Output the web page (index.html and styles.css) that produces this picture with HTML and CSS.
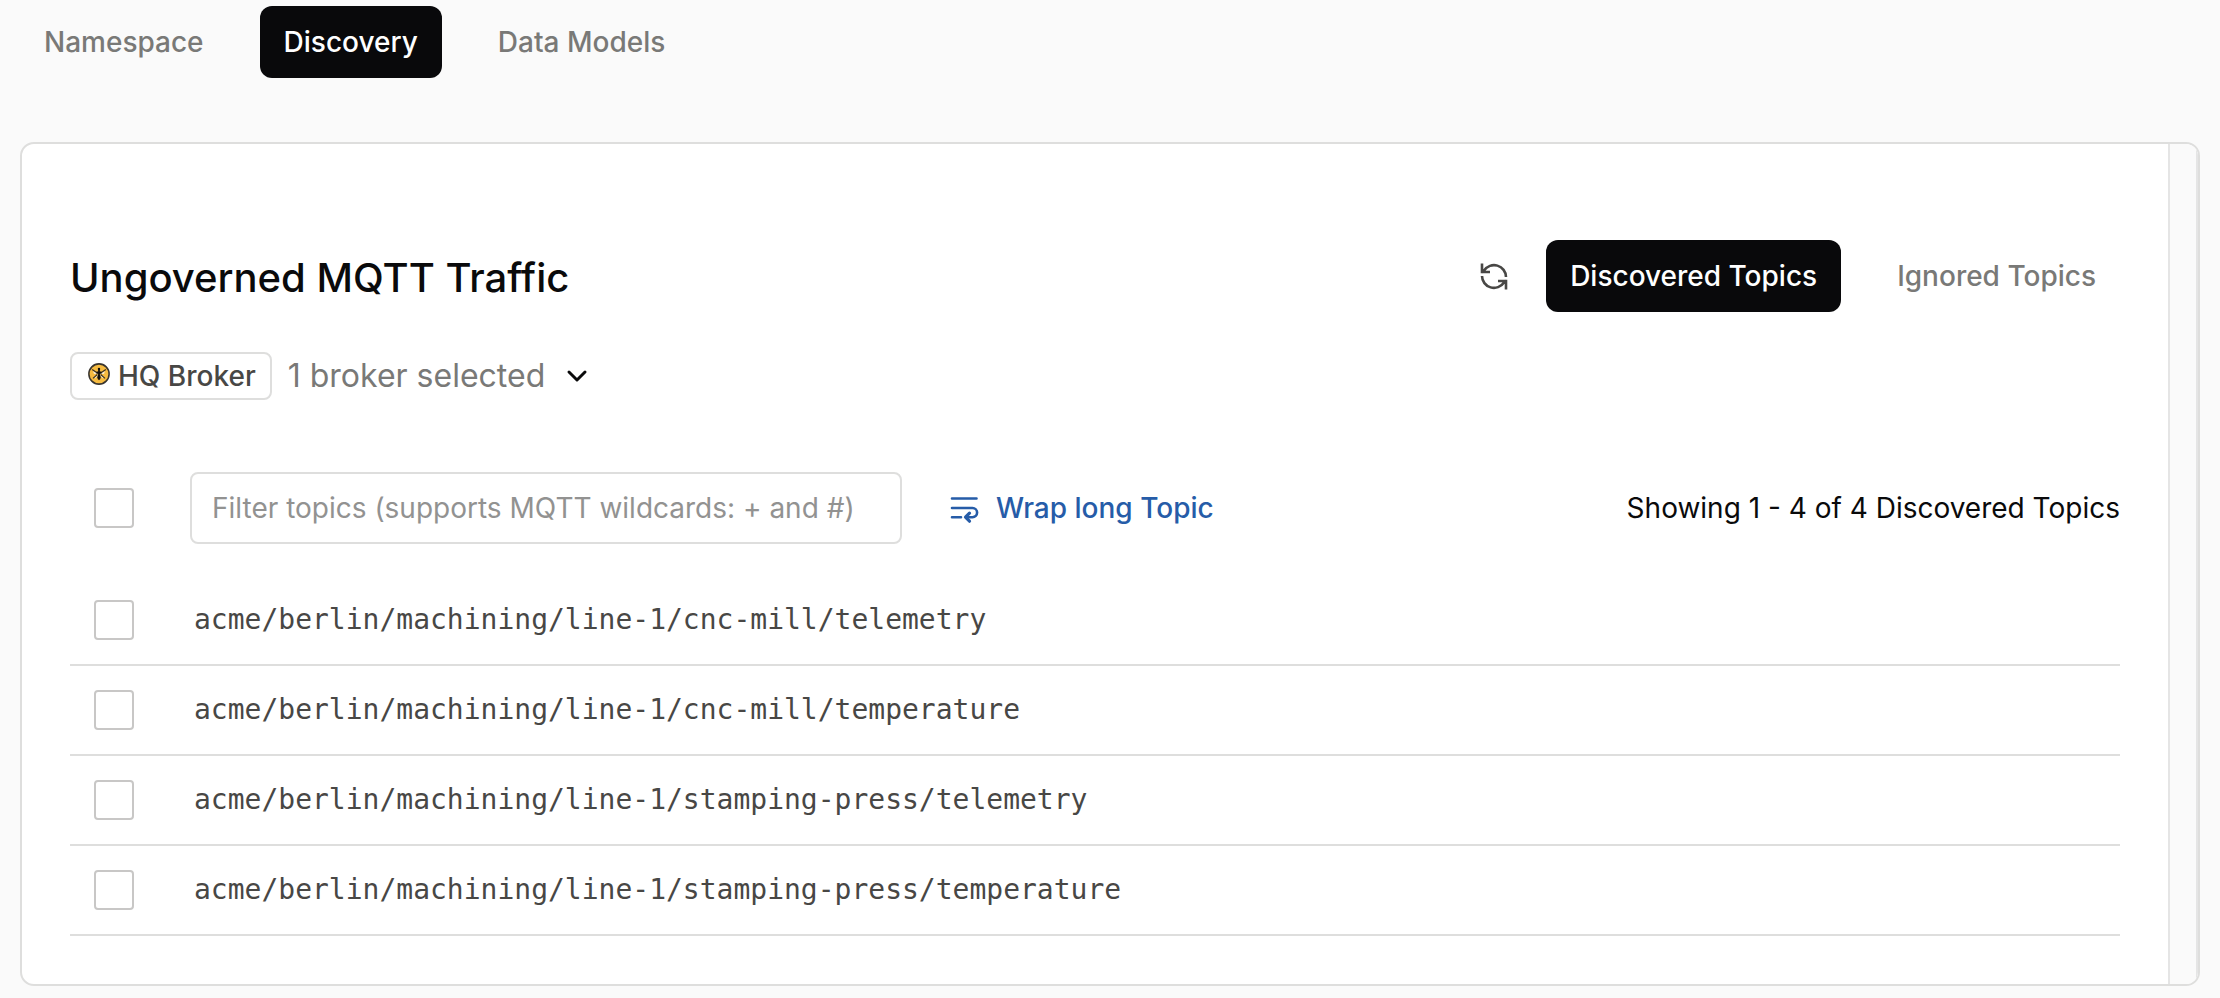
FILE: index.html
```html
<!DOCTYPE html>
<html lang="en">
<head>
<meta charset="utf-8">
<meta name="viewport" content="width=device-width, initial-scale=1">
<title>Discovery</title>
<link rel="stylesheet" href="styles.css">
</head>
<body>
<nav class="tabs" aria-label="Sections">
  <button class="tab" type="button">Namespace</button>
  <button class="tab tab-active" type="button">Discovery</button>
  <button class="tab" type="button">Data Models</button>
</nav>
<main class="card">
  <section class="content">
    <header class="header">
      <h1 class="title">Ungoverned MQTT Traffic</h1>
      <button class="icon-button" type="button" aria-label="Refresh">
        <svg class="icon" viewBox="0 0 32 32" fill="none" stroke="currentColor" stroke-width="2.6">
          <path d="M28 17A12 12 0 0 0 6 10.500L4 12.500M4 3.500V12H12M4 16A12 12 0 0 0 26 22.500L28 20.500M28 29.500V21H20"/>
        </svg>
      </button>
      <div class="views">
        <button class="tab tab-active" type="button">Discovered Topics</button>
        <button class="tab" type="button">Ignored Topics</button>
      </div>
    </header>
    <button class="broker" type="button">
      <span class="chip">
        <svg class="bee" viewBox="0 0 20 20">
          <circle cx="10" cy="10" r="9.200" fill="#f6bb40" stroke="#38342e" stroke-width="1.400"/>
          <path d="M9 8.500 4.500 7.500 5.500 10 9 9.800ZM11 8.500l4.500-1-1 2.500-3.500-.2ZM9 10.500l-3.500 2 1 1.500 2.500-2.500ZM11 10.500l3.500 2-1 1.500-2.500-2.500Z" fill="#f8ecd0"/>
          <path d="M8.500 9 3.800 5.800M11.500 9 16.200 5.800M8.500 10.500 4.500 14M11.500 10.500 15.500 14" stroke="#3a3020" stroke-width="1.100"/>
          <circle cx="10" cy="5.500" r="1.100" fill="#14110c"/>
          <path d="M7.800 7.800h4.400v2h-4.400zM9.200 5h1.600v6h-1.600z" fill="#14110c"/>
          <ellipse cx="10" cy="13" rx="1.500" ry="2.600" fill="#14110c"/>
        </svg>
        HQ Broker
      </span>
      <span class="broker-count">1 broker selected</span>
      <svg class="chevron" viewBox="0 0 32 32" fill="none" stroke="currentColor" stroke-width="3" stroke-linecap="round" stroke-linejoin="round"><path d="M8 12l8 8 8-8"/></svg>
    </button>
    <div class="toolbar">
      <input class="check" type="checkbox" aria-label="Select all topics">
      <input class="filter" type="text" aria-label="Filter topics" placeholder="Filter topics (supports MQTT wildcards: + and #)">
      <button class="wrap" type="button">
        <svg class="icon" viewBox="0 0 32 32" fill="none" stroke="currentColor" stroke-width="2.600" stroke-linecap="round" stroke-linejoin="round">
          <path d="M4 6.500H28.500M4 16H24.500A4.600 4.600 0 0 1 24.500 25.200H18M4 25.200H13"/>
          <path d="M21.500 21.200 17.500 25.200 21.500 29.200" stroke-width="3.200"/>
        </svg>
        Wrap long Topic
      </button>
      <span class="summary">Showing 1 - 4 of 4 Discovered Topics</span>
    </div>
    <ul class="topics">
      <li class="topic"><input class="check" type="checkbox" id="t1"><label class="path" for="t1">acme/berlin/machining/line-1/cnc-mill/telemetry</label></li>
      <li class="topic"><input class="check" type="checkbox" id="t2"><label class="path" for="t2">acme/berlin/machining/line-1/cnc-mill/temperature</label></li>
      <li class="topic"><input class="check" type="checkbox" id="t3"><label class="path" for="t3">acme/berlin/machining/line-1/stamping-press/telemetry</label></li>
      <li class="topic"><input class="check" type="checkbox" id="t4"><label class="path" for="t4">acme/berlin/machining/line-1/stamping-press/temperature</label></li>
    </ul>
  </section>
  <div class="gutter"></div>
</main>
</body>
</html>
```

FILE: styles.css
```css
* {
  box-sizing: border-box;
}

body {
  margin: 0;
  padding: 6px 20px 12px;
  background: #fafafa;
  color: #0a0a0b;
  font: 400 28px/40px Inter, "Liberation Sans", sans-serif;
}

button {
  border: 0;
  padding: 0;
  background: none;
  color: inherit;
  font: inherit;
  cursor: pointer;
}

.tabs,
.views {
  display: flex;
  gap: 32px;
}

.tabs {
  margin-bottom: 64px;
}

.tab {
  padding: 16px 24px;
  border-radius: 12px;
  color: #797977;
  font-weight: 500;
  white-space: nowrap;
}

.tab-active {
  background: #09090b;
  color: #fff;
}

.card {
  display: flex;
  border: 2px solid #dededd;
  border-radius: 14px;
  background: #fff;
  overflow: hidden;
}

.content {
  flex: 1;
  min-width: 0;
  padding: 96px 48px 48px;
}

.gutter {
  width: 30px;
  border: solid #e5e5e5;
  border-width: 0 2px;
  background: #fafafa;
}

.header {
  display: flex;
  align-items: center;
  margin-bottom: 40px;
}

.title {
  flex: 1;
  margin: 0;
  padding-top: 4px;
  font-size: 40px;
  font-weight: 500;
  line-height: 48px;
}

.icon-button {
  display: flex;
  margin-right: 36px;
  color: #484745;
}

.icon {
  width: 32px;
  height: 32px;
  flex: none;
}

.broker {
  display: flex;
  align-items: center;
  margin-bottom: 72px;
}

.chip {
  display: flex;
  align-items: center;
  gap: 8px;
  height: 48px;
  padding: 0 14px 0 16px;
  border: 2px solid #dededd;
  border-radius: 8px;
  color: #484745;
  font-weight: 500;
}

.bee {
  width: 22px;
  height: 22px;
  margin-bottom: 4px;
}

.broker-count {
  margin: 0 16px;
  color: #797977;
  font-size: 32px;
}

.chevron {
  width: 32px;
  height: 32px;
}

.toolbar {
  display: flex;
  align-items: center;
  padding-left: 24px;
  margin-bottom: 32px;
}

.check {
  appearance: none;
  flex: none;
  width: 40px;
  height: 40px;
  margin: 0;
  border: 2px solid #c8c7c6;
  border-radius: 4px;
  background: #fff;
}

.check:checked {
  background: #09090b;
}

.filter {
  width: 712px;
  height: 72px;
  margin: 0 46px 0 56px;
  padding: 0 20px;
  border: 2px solid #dededd;
  border-radius: 8px;
  background: #fff;
  color: inherit;
  font: inherit;
}

.filter::placeholder {
  color: #929291;
}

.wrap {
  display: flex;
  align-items: center;
  gap: 16px;
  color: #265ca8;
  font-weight: 500;
}

.summary {
  margin-left: auto;
}

.topics {
  margin: 0;
  padding: 0;
  list-style: none;
}

.topic {
  display: flex;
  align-items: center;
  gap: 60px;
  padding: 24px;
  border-bottom: 2px solid #dededd;
}

.path {
  color: #484745;
  font-family: "DejaVu Sans Mono", monospace;
}
```
